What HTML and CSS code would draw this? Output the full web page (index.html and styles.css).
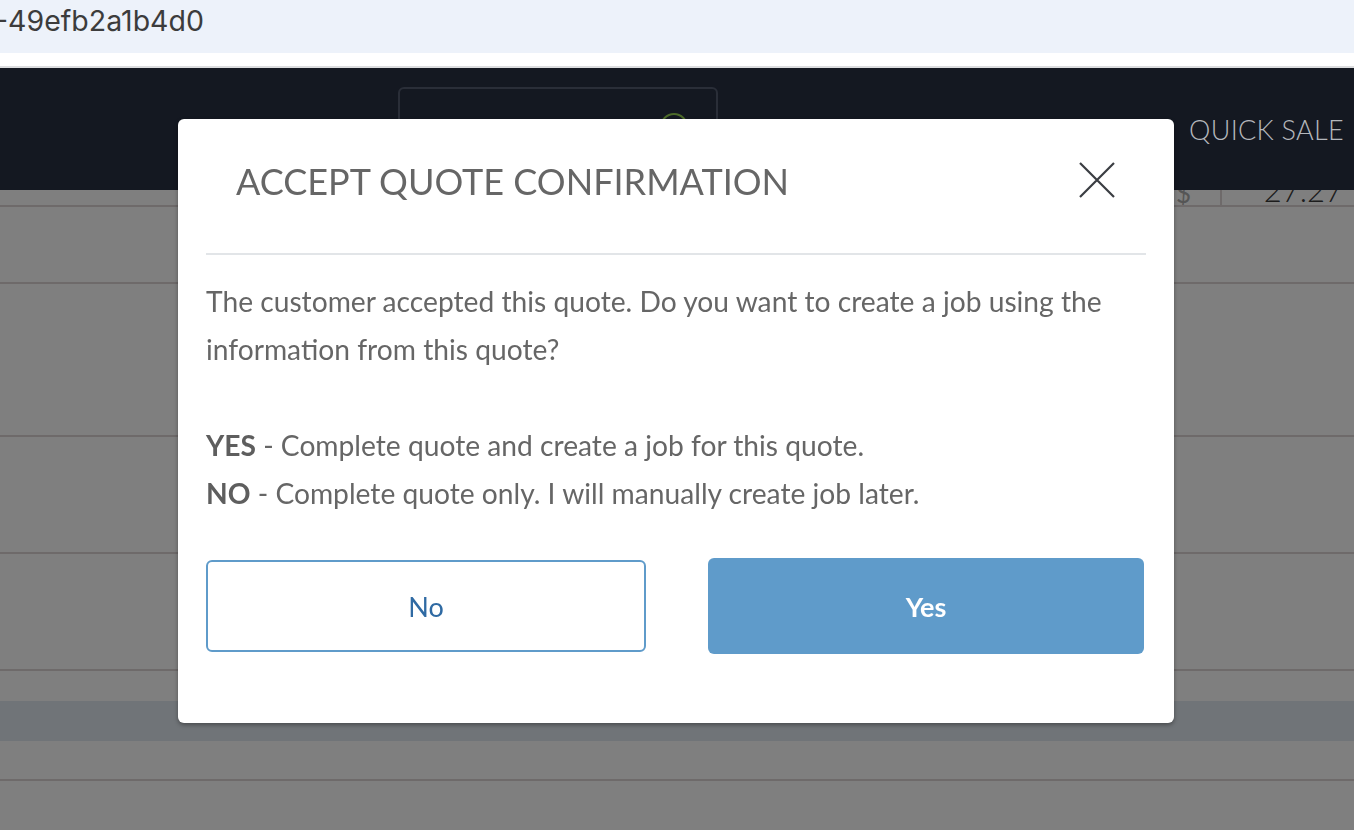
FILE: index.html
```html
<!DOCTYPE html>
<html>
<head>
  <link rel="stylesheet" href="styles.css">
  <title>Accept Quote</title>
</head>
<body>
  <div class="urlbar">-49efb2a1b4d0</div>

  <header class="topnav">
    <div class="search-box">
      <span class="search-dot"></span>
    </div>
    <a class="quick-sale">QUICK SALE</a>
  </header>

  <main class="page">
    <div class="row row-total">
      <span class="currency">$</span>
      <span class="total">27.27</span>
    </div>
    <div class="row row-a"></div>
    <div class="row row-b"></div>
    <div class="row row-c"></div>
    <div class="row row-d"></div>
    <div class="row row-e"></div>
    <div class="band"></div>
    <div class="row row-f"></div>
    <div class="row row-g"></div>
    <div class="backdrop"></div>
  </main>

  <div class="modal">
    <div class="modal-header">
      <h2>ACCEPT QUOTE CONFIRMATION</h2>
      <button class="close-btn" aria-label="Close">
        <svg width="36" height="36" viewBox="0 0 36 36">
          <path d="M1 1 L35 35 M35 1 L1 35" stroke="#3a3d42" stroke-width="2.2" fill="none"/>
        </svg>
      </button>
    </div>
    <div class="modal-body">
      <p>The customer accepted this quote. Do you want to create a job using the information from this quote?</p>
      <p class="options">
        <b>YES</b> - Complete quote and create a job for this quote.<br>
        <b>NO</b> - Complete quote only. I will manually create job later.
      </p>
    </div>
    <div class="modal-footer">
      <button class="btn btn-no">No</button>
      <button class="btn btn-yes">Yes</button>
    </div>
  </div>
</body>
</html>
```

FILE: styles.css
```css
/* Accept quote modal over the quote page */
body {
  margin: 0;
  font-family: Lato, "Open Sans", sans-serif;
  background-color: #fff;
  overflow: hidden;
  height: 830px;
}

.urlbar {
  height: 53px;
  background-color: #edf2fa;
  color: #3c3c3c;
  font-family: Inter, "Noto Sans", sans-serif;
  font-size: 28.5px;
  line-height: 42px;
  margin-left: -5px;
  border-bottom: 13px solid #fff;
}

.topnav {
  position: relative;
  z-index: 2;
  height: 122px;
  border-top: 2px solid #dcdddf;
  background-color: #141821;
  display: flex;
  align-items: flex-start;
}

.search-box {
  margin: 19px 0 0 398px;
  width: 316px;
  height: 60px;
  border: 2px solid #2a2e38;
  border-radius: 6px;
  position: relative;
}

.search-dot {
  position: absolute;
  left: 260px;
  top: 24px;
  width: 24px;
  height: 24px;
  border: 2px solid #4d6b2a;
  border-radius: 50%;
}

.quick-sale {
  margin: 45px 0 0 auto;
  padding-right: 10px;
  color: #b4b7bc;
  font-size: 27px;
  font-weight: 300;
  letter-spacing: 0.3px;
}

/* page under the backdrop */
.page {
  position: relative;
  height: 640px;
  background-color: #fff;
}

.row {
  border-bottom: 2px solid #ddd5d5;
}

.row-total {
  height: 15px;
  overflow: hidden;
  display: flex;
  justify-content: flex-end;
}

.currency {
  display: block;
  height: 17px;
  color: #aaa;
  font-size: 26px;
  line-height: 6px;
  padding-right: 29px;
  border-right: 2px solid #ddd5d5;
}

.total {
  display: block;
  width: 121px;
  padding-right: 11px;
  text-align: right;
  color: #3a3a3a;
  font-size: 31px;
  font-weight: 300;
  line-height: 0px;
}

.row-a { height: 75px; }
.row-b { height: 151px; }
.row-c { height: 115px; }
.row-d { height: 115px; }
.row-e { height: 30px; border-bottom: none; }

.band {
  height: 40px;
  background-color: #e1e8f0;
}

.row-f { height: 38px; }
.row-g { height: 48px; border-bottom: none; }

.backdrop {
  position: absolute;
  inset: 0;
  background-color: rgba(0, 0, 0, 0.5);
}

/* modal */
.modal {
  position: fixed;
  z-index: 3;
  left: 178px;
  top: 119px;
  width: 996px;
  height: 604px;
  background-color: #fff;
  border-radius: 6px;
  box-shadow: 0 2px 4px rgba(0, 0, 0, 0.35);
  box-sizing: border-box;
  padding: 0 28px;
  color: #666;
}

.modal-header {
  height: 126px;
  padding: 0 31px 8px 30px;
  display: flex;
  align-items: center;
  justify-content: space-between;
  border-bottom: 2px solid #e2e5e8;
}

.modal-header h2 {
  margin: 0;
  font-size: 36px;
  font-weight: 400;
  color: #666;
  margin-top: -3px;
}

.close-btn {
  background: none;
  border: none;
  padding: 0;
  width: 36px;
  height: 36px;
  margin-top: -5px;
  cursor: pointer;
}

.modal-body {
  padding-top: 22px;
  font-size: 28.2px;
  line-height: 48px;
}

.modal-body p {
  margin: 0;
}

.modal-body .options {
  margin-top: 48px;
}

.modal-body b {
  font-weight: 700;
  color: #5e5e5e;
}

.modal-footer {
  display: flex;
  justify-content: space-between;
  align-items: center;
  margin-top: 41px;
}

.btn {
  font-family: inherit;
  font-size: 27px;
  border-radius: 6px;
  cursor: pointer;
}

.btn-no {
  width: 440px;
  height: 92px;
  background-color: #fff;
  border: 2px solid #5f9bca;
  color: #2f6aa3;
}

.btn-yes {
  width: 436px;
  height: 96px;
  margin-right: 2px;
  background-color: #5f9bca;
  border: none;
  color: #fff;
  font-weight: 700;
}
```
